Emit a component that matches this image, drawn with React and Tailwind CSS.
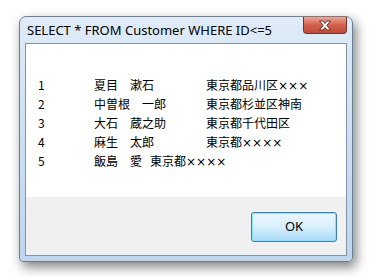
import React from 'react';

const rows = [
  ['1', '夏目\u3000漱石', '東京都品川区', '×××'],
  ['2', '中曽根\u3000一郎', '東京都杉並区神南', ''],
  ['3', '大石\u3000蔵之助', '東京都千代田区', ''],
  ['4', '麻生\u3000太郎', '東京都', '××××'],
  ['5', '飯島\u3000愛', '東京都', '××××'],
];

const CloseGlyph = () => (
  <svg width="14" height="11" viewBox="0 0 14 11">
    <path
      d="M1.5 1 H5 L7 3.5 L9 1 H12.5 L8.8 5.5 L12.5 10 H9 L7 7.5 L5 10 H1.5 L5.2 5.5 Z"
      fill="#ffffff"
      stroke="#5a2a22"
      strokeWidth="0.9"
      strokeLinejoin="round"
    />
  </svg>
);

const App = () => {
  return (
    <div className="w-[373px] h-[277px] bg-white overflow-hidden pt-[16px] pl-[19px]">
      <div className="w-[334px] h-[246px] flex flex-col rounded-t-[7px] rounded-b-[4px] border border-[#6f7f92] bg-gradient-to-b from-[#dfebf7] via-[#cddff1] to-[#bfd6ee] shadow-[3px_5px_12px_rgba(0,0,0,0.5)]">
        <div className="h-[26px] flex items-start justify-between">
          <div
            className="pl-[7px] pt-[5px] text-[13px] leading-[16px] text-black"
            style={{ fontFamily: '"Noto Sans", "Open Sans", sans-serif' }}
          >
            SELECT * FROM Customer WHERE ID&lt;=5
          </div>
          <div className="mr-[5px] w-[44px] h-[17px] flex items-center justify-center rounded-b-[4px] border border-t-0 border-[#7a3226] bg-gradient-to-b from-[#e9a899] via-[#cf5f4c] to-[#c24a36]">
            <CloseGlyph />
          </div>
        </div>
        <div className="flex-1 mx-[5px] mb-[5px] border border-[#8393a6] flex flex-col">
          <div
            className="h-[153px] bg-white pt-[32px] pl-[12px] text-[12px] leading-[18px] text-black whitespace-pre [tab-size:56px]"
            style={{ fontFamily: '"Noto Sans CJK JP", "Noto Sans", sans-serif' }}
          >
            {rows.map((r) => (
              <div key={r[0]}>
                {r[0] + '\t' + r[1] + '\t' + r[2]}
                <span style={{ fontFamily: '"DejaVu Sans", sans-serif' }}>{r[3]}</span>
              </div>
            ))}
          </div>
          <div className="flex-1 bg-[#f0f0f0] flex justify-end items-start pt-[15px] pr-[9px]">
            <button
              className="w-[86px] h-[30px] rounded-[3px] border border-[#3c7fb1] bg-gradient-to-b from-[#eaf6fd] via-[#d9f0fc] to-[#a7d9f5] shadow-[inset_0_0_0_1px_#8fe0fb] text-[13px] text-black"
              style={{ fontFamily: '"Noto Sans", "Open Sans", sans-serif' }}
            >
              OK
            </button>
          </div>
        </div>
      </div>
    </div>
  );
};

export default App;
